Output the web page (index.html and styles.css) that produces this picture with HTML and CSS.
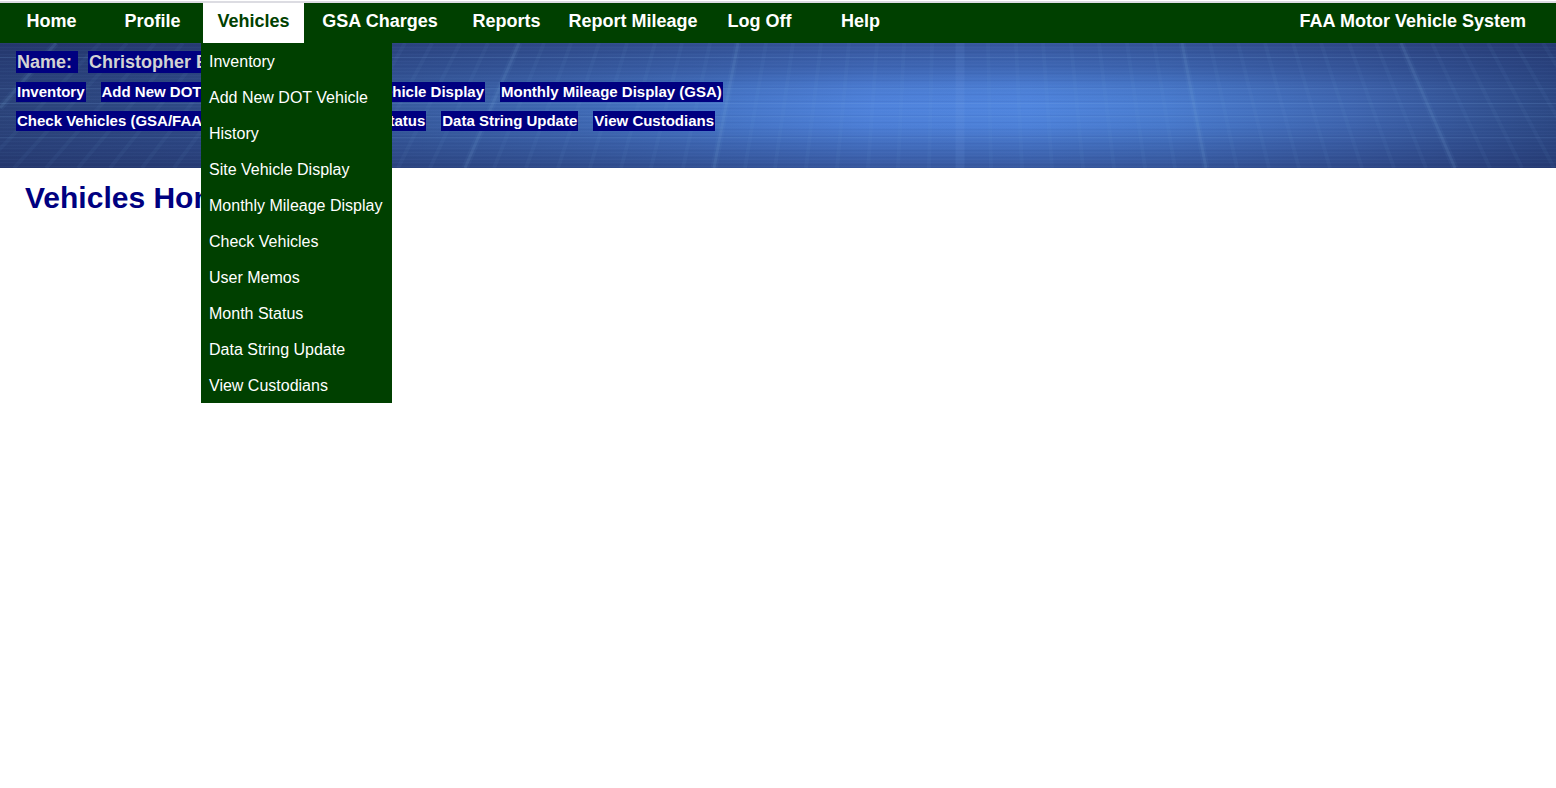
FILE: index.html
```html
<!DOCTYPE html>
<html lang="en">
<head>
<meta charset="utf-8">
<title>FAA Motor Vehicle System</title>
<link rel="stylesheet" href="styles.css">
</head>
<body>
<nav class="topbar">
  <ul class="menu">
    <li class="menu-item"><a href="#">Home</a></li>
    <li class="menu-item"><a href="#">Profile</a></li>
    <li class="menu-item active"><a href="#">Vehicles</a>
      <ul class="dropdown">
        <li><a href="#">Inventory</a></li>
        <li><a href="#">Add New DOT Vehicle</a></li>
        <li><a href="#">History</a></li>
        <li><a href="#">Site Vehicle Display</a></li>
        <li><a href="#">Monthly Mileage Display</a></li>
        <li><a href="#">Check Vehicles</a></li>
        <li><a href="#">User Memos</a></li>
        <li><a href="#">Month Status</a></li>
        <li><a href="#">Data String Update</a></li>
        <li><a href="#">View Custodians</a></li>
      </ul>
    </li>
    <li class="menu-item wide"><a href="#">GSA Charges</a></li>
    <li class="menu-item"><a href="#">Reports</a></li>
    <li class="menu-item wide"><a href="#">Report Mileage</a></li>
    <li class="menu-item"><a href="#">Log Off</a></li>
    <li class="menu-item"><a href="#">Help</a></li>
  </ul>
  <span class="brand">FAA Motor Vehicle System</span>
</nav>
<header class="banner">
  <svg class="banner-art" viewBox="0 0 1556 125" preserveAspectRatio="none" aria-hidden="true">
    <defs>
      <linearGradient id="glow">
        <stop offset="0" stop-color="#2b4379"/>
        <stop offset=".13" stop-color="#2f4b87"/>
        <stop offset=".26" stop-color="#385c9f"/>
        <stop offset=".38" stop-color="#406bb6"/>
        <stop offset=".48" stop-color="#4879cc"/>
        <stop offset=".56" stop-color="#4f83dc"/>
        <stop offset=".66" stop-color="#5086df"/>
        <stop offset=".75" stop-color="#4a7dd0"/>
        <stop offset=".87" stop-color="#3f66b0"/>
        <stop offset="1" stop-color="#2c4883"/>
      </linearGradient>
      <linearGradient id="shade" x2="0" y2="1">
        <stop offset="0" stop-color="#1f2c60" stop-opacity=".52"/>
        <stop offset=".2" stop-color="#233670" stop-opacity=".38"/>
        <stop offset=".36" stop-color="#233670" stop-opacity=".1"/>
        <stop offset=".5" stop-color="#233670" stop-opacity="0"/>
        <stop offset=".66" stop-color="#233670" stop-opacity=".06"/>
        <stop offset=".82" stop-color="#233670" stop-opacity=".3"/>
        <stop offset="1" stop-color="#1f2c60" stop-opacity=".52"/>
      </linearGradient>
      <pattern id="scan" width="1556" height="7" patternUnits="userSpaceOnUse">
        <path d="M0 .5H1556M0 4.5H1556" stroke="#8fb4f0" stroke-opacity=".04"/>
        <path d="M0 2.5H1556" stroke="#16285c" stroke-opacity=".06"/>
      </pattern>
      <g id="rays" fill="none" stroke="#7fa8dc">
        <path stroke-width="4" stroke-opacity=".06" d="M28 0L31 125M56 0L62 125M83 0L92 125M111 0L123 125M139 0L154 125M167 0L185 125M194 0L215 125M250 0L277 125M278 0L309 125M305 0L339 125M333 0L370 125M361 0L402 125M389 0L434 125M416 0L466 125M472 0L530 125M500 0L562 125M528 0L594 125M555 0L626 125M583 0L658 125M611 0L690 125M638 0L722 125M694 0L786 125M722 0L818 125M750 0L850 125M777 0L882 125M805 0L914 125M833 0L946 125M860 0L978 125"/>
        <path stroke-width="7" stroke-opacity=".06" d="M222 0L246 125M441 0L495 125M663 0L745 125M904 0L960 65"/>
        <path stroke-width="3" stroke-opacity=".13" d="M222 0L246 125M441 0L495 125M663 0L745 125M904 0L960 65"/>
      </g>
    </defs>
    <rect width="1556" height="125" fill="url(#glow)"/>
    <rect width="1556" height="125" fill="url(#shade)"/>
    <use href="#rays" transform="translate(960 0)"/>
    <use href="#rays" transform="translate(960 0) scale(-1 1)"/>
    <path d="M960 0V125" stroke="#7fa8e8" stroke-width="9" stroke-opacity=".12"/>
    <rect width="1556" height="125" fill="url(#scan)"/>
    <path d="M0 14.5H1556M0 45.5H1556M0 60.5H1556M0 73.5H1556M0 94.5H1556" stroke="#8fbcf0" stroke-opacity=".12"/>
  </svg>
  <p class="user"><span class="tag">Name:&nbsp;</span><span class="tag">Christopher E</span></p>
  <div class="links">
    <a class="tag" href="#">Inventory</a>
    <a class="tag" href="#">Add New DOT Vehicle</a>
    <a class="tag" href="#">History</a>
    <a class="tag" href="#">Site Vehicle Display</a>
    <a class="tag" href="#">Monthly Mileage Display (GSA)</a>
  </div>
  <div class="links">
    <a class="tag" href="#">Check Vehicles (GSA/FAA)</a>
    <a class="tag" href="#">User Memos</a>
    <a class="tag" href="#">Month Status</a>
    <a class="tag" href="#">Data String Update</a>
    <a class="tag" href="#">View Custodians</a>
  </div>
</header>
<main>
  <h1>Vehicles Home</h1>
</main>
</body>
</html>
```

FILE: styles.css
```css
* {
  box-sizing: border-box;
}

body {
  min-height: 100vh;
  margin: 0;
  padding-top: 1px;
  background: #fff;
  font-family: "Liberation Sans", Arial, sans-serif;
}

a {
  color: inherit;
  text-decoration: none;
}

ul {
  list-style: none;
  margin: 0;
  padding: 0;
}

.topbar {
  position: relative;
  z-index: 2;
  display: flex;
  justify-content: space-between;
  border-top: 2px solid #dcdce2;
  background: #004000;
  color: #fff;
  font-size: 18px;
  font-weight: bold;
  line-height: 36px;
}

.menu {
  display: flex;
  flex: 1;
  padding-left: 1px;
}

.menu-item {
  position: relative;
  flex: 0 0 101px;
  height: 40px;
  text-align: center;
  white-space: nowrap;
}

.menu-item.wide {
  flex-basis: 152px;
}

.menu-item > a {
  display: block;
}

.menu-item.active {
  background: #fff;
  color: #004000;
}

.dropdown {
  position: absolute;
  top: 100%;
  left: -2px;
  background: #004000;
  color: #fff;
  font-size: 16px;
  font-weight: normal;
  line-height: 34px;
  text-align: left;
}

.dropdown a {
  display: block;
  padding: 2px 10px 0 8px;
}

.brand {
  padding-right: 30px;
}

.banner {
  position: relative;
  display: flex;
  flex-direction: column;
  align-items: flex-start;
  padding: 8px 16px 37px;
  background: #2f4b87;
  color: #fff;
  font-weight: bold;
}

.banner-art {
  position: absolute;
  inset: 0;
  width: 100%;
  height: 100%;
}

.tag {
  padding: 0 1px;
  background: #000080;
}

.user {
  position: relative;
  display: flex;
  gap: 10px;
  margin: 0;
  color: #d3d3d3;
  font-size: 18px;
  line-height: 22px;
}

.links {
  position: relative;
  display: flex;
  gap: 15px;
  margin-top: 9px;
  font-size: 15px;
  line-height: 20px;
}

main {
  padding: 12px 25px;
}

h1 {
  margin: 0;
  color: #000080;
  font-size: 30px;
  line-height: 36px;
}
```
